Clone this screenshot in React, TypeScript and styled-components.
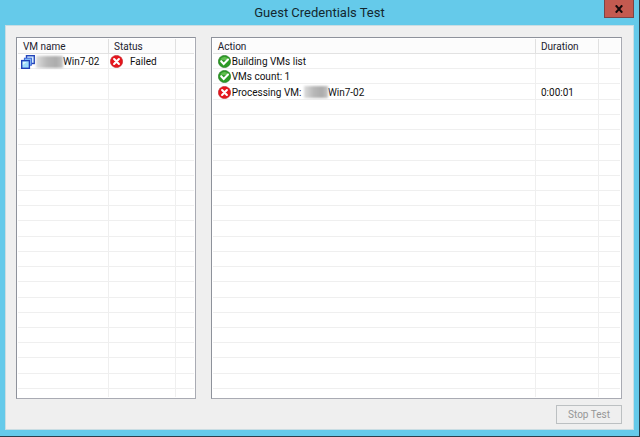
import React from "react";
import styled, { createGlobalStyle } from "styled-components";

const GlobalStyle = createGlobalStyle`
  * { box-sizing: border-box; }
  body { margin: 0; }
`;

const uiFont = `Roboto, "Liberation Sans", Arial, sans-serif`;

const Window = styled.main`
  display: flex;
  flex-direction: column;
  min-height: 100vh;
  padding: 0 5px 6px;
  background: #65caea;
  border-right: 1px solid #2d3f4b;
  border-bottom: 1px solid #2d3f4b;
  font-family: ${uiFont};
  font-size: 10px;
  color: #111;
`;

const TitleBar = styled.header`
  display: grid;
  grid-template-columns: 30px 1fr 30px;
  height: 25px;
`;

const Title = styled.h1`
  grid-column: 2;
  margin: 0;
  text-align: center;
  font-family: Roboto, "Open Sans", sans-serif;
  font-size: 13px;
  font-weight: 400;
  line-height: 25px;
  color: #13272f;
`;

const CloseButton = styled.button`
  display: flex;
  align-items: center;
  justify-content: center;
  height: 18px;
  padding: 0;
  border: 1px solid #7b4447;
  border-top: 0;
  background: #c35a50;
`;

const Body = styled.section`
  flex: 1;
  display: flex;
  flex-direction: column;
  padding: 11px 11px 5px 10px;
  background: #efefef;
  border: 1px solid #c9dde3;
`;

const Panels = styled.div`
  flex: 1;
  display: grid;
  grid-template-columns: minmax(0, 180fr) minmax(0, 412fr);
  gap: 15px;
`;

const Panel = styled.div`
  display: grid;
  padding: 1px;
  background: #fff;
  border: 1px solid #8e929b;
  border-right-color: #a9abb3;
  border-bottom-color: #a9abb3;
`;

const Table = styled.table`
  width: 100%;
  height: 100%;
  table-layout: fixed;
  border-collapse: separate;
  border-spacing: 0;
`;

const Row = styled.tr<{ $short?: boolean }>`
  height: ${(p) => (p.$short ? 8 : 15)}px;
`;

const HeadCell = styled.th`
  padding: 1px 0 0 5px;
  text-align: left;
  font-weight: 400;
  line-height: 13px;
  white-space: nowrap;
  color: #22222e;
  background: #fcfcfc;
  border-bottom: 1px solid #e2e2e2;
  border-right: 1px solid #e0e0e0;
  &:last-child { border-right: 0; }
`;

const Cell = styled.td<{ $last?: boolean; $inset: number }>`
  padding: 1px 0 0 ${(p) => p.$inset}px;
  line-height: 13px;
  white-space: nowrap;
  border-bottom: ${(p) => (p.$last ? 0 : 1)}px solid #efefef;
  border-right: 1px solid #efefef;
  &:last-child { border-right: 0; }
`;

const Item = styled.div<{ $gap?: number }>`
  display: flex;
  align-items: center;
  gap: ${(p) => p.$gap ?? 1}px;
  height: 13px;
`;

const Name = styled.span`
  display: flex;
  align-items: center;
`;

const Redacted = styled.span<{ $width: number }>`
  width: ${(p) => p.$width}px;
  height: 12px;
  background: linear-gradient(90deg, #dedede, #b8b8b8 40%, #acacac 75%, #c4c4c4);
  filter: blur(1px);
`;

const Footer = styled.footer`
  display: flex;
  justify-content: flex-end;
  padding-top: 6px;
`;

const StopButton = styled.button`
  width: 66px;
  height: 19px;
  padding: 0;
  font-family: ${uiFont};
  font-size: 10px;
  line-height: 16px;
  color: #969696;
  background: #efefef;
  border: 1px solid #bcc0c2;
`;

const Icon = styled.svg`
  display: block;
  flex: none;
`;

const FailIcon = () => (
  <Icon width="13" height="13" viewBox="0 0 13 13" aria-hidden="true">
    <circle cx="6.5" cy="6.5" r="6.1" fill="#e6151c" stroke="#c2242a" strokeWidth=".7" />
    <path d="M4.1 4.1l4.8 4.8M8.9 4.1L4.1 8.9" stroke="#fff" strokeWidth="2.1" strokeLinecap="round" />
  </Icon>
);

const OkIcon = () => (
  <Icon width="13" height="13" viewBox="0 0 13 13" aria-hidden="true">
    <circle cx="6.5" cy="6.5" r="6.1" fill="#2c9a25" stroke="#237a20" strokeWidth=".7" />
    <path d="M2.2 4.2Q6.5-.4 10.8 4.2Q6.5 6.4 2.2 4.2" fill="#62bd50" />
    <path d="M3.2 6.2l2.5 2.7 4.3-4.3" fill="none" stroke="#fff" strokeWidth="2.1" strokeLinecap="round" />
  </Icon>
);

const VmIcon = () => (
  <Icon width="14" height="14" viewBox="0 0 14 14" aria-hidden="true">
    <rect x="5.5" y=".7" width="7.8" height="7.8" fill="#d4edff" stroke="#2444b8" strokeWidth="1.4" />
    <rect x="3.4" y="3.2" width="7" height="7" fill="#8cc8fa" stroke="#3c62d8" strokeWidth="1" />
    <rect x=".7" y="5.6" width="7.7" height="7.7" fill="#9fdcfc" stroke="#2040b8" strokeWidth="1.4" />
    <path d="M1.8 6.9h4L1.8 10z" fill="#d9f5ff" />
  </Icon>
);

const CloseIcon = () => (
  <Icon width="8" height="8" viewBox="0 0 8 8" aria-hidden="true">
    <path d="M.8.4l6.4 7.2M7.2.4L.8 7.6" stroke="#16090a" strokeWidth="2.1" />
  </Icon>
);

type GridProps = {
  label: string;
  widths: (number | undefined)[];
  insets: number[];
  heads: string[];
  rows: React.ReactNode[][];
};

const ROW_COUNT = 23;

const ListGrid = ({ label, widths, insets, heads, rows }: GridProps) => (
  <Panel>
    <Table aria-label={label}>
      <colgroup>
        {widths.map((w, i) => (
          <col key={i} width={w} />
        ))}
      </colgroup>
      <thead>
        <Row>
          {heads.map((h, i) => (
            <HeadCell key={i} scope="col">{h}</HeadCell>
          ))}
        </Row>
      </thead>
      <tbody>
        {Array.from({ length: ROW_COUNT }, (_, r) => (
          <Row key={r} $short={r === ROW_COUNT - 1}>
            {heads.map((_h, c) => (
              <Cell key={c} $inset={insets[c]} $last={r === ROW_COUNT - 1}>{rows[r]?.[c]}</Cell>
            ))}
          </Row>
        ))}
      </tbody>
    </Table>
  </Panel>
);

export default function App() {
  return (
    <>
      <GlobalStyle />
      <Window>
        <TitleBar>
          <Title>Guest Credentials Test</Title>
          <CloseButton type="button" aria-label="Close"><CloseIcon /></CloseButton>
        </TitleBar>
        <Body>
          <Panels>
            <ListGrid
              label="Virtual machines"
              widths={[91, 67, undefined]}
              insets={[3, 1, 0]}
              heads={["VM name", "Status", ""]}
              rows={[
                [
                  <Item><VmIcon /><Name><Redacted $width={27} />Win7-02</Name></Item>,
                  <Item $gap={7}><FailIcon />Failed</Item>,
                ],
              ]}
            />
            <ListGrid
              label="Actions"
              widths={[undefined, 63, 21]}
              insets={[5, 5, 0]}
              heads={["Action", "Duration", ""]}
              rows={[
                [<Item><OkIcon />Building VMs list</Item>],
                [<Item><OkIcon />VMs count: 1</Item>],
                [<Item><FailIcon /><Name>Processing VM:&nbsp;<Redacted $width={24} />Win7-02</Name></Item>, "0:00:01"],
              ]}
            />
          </Panels>
          <Footer>
            <StopButton type="button" disabled>Stop Test</StopButton>
          </Footer>
        </Body>
      </Window>
    </>
  );
}
